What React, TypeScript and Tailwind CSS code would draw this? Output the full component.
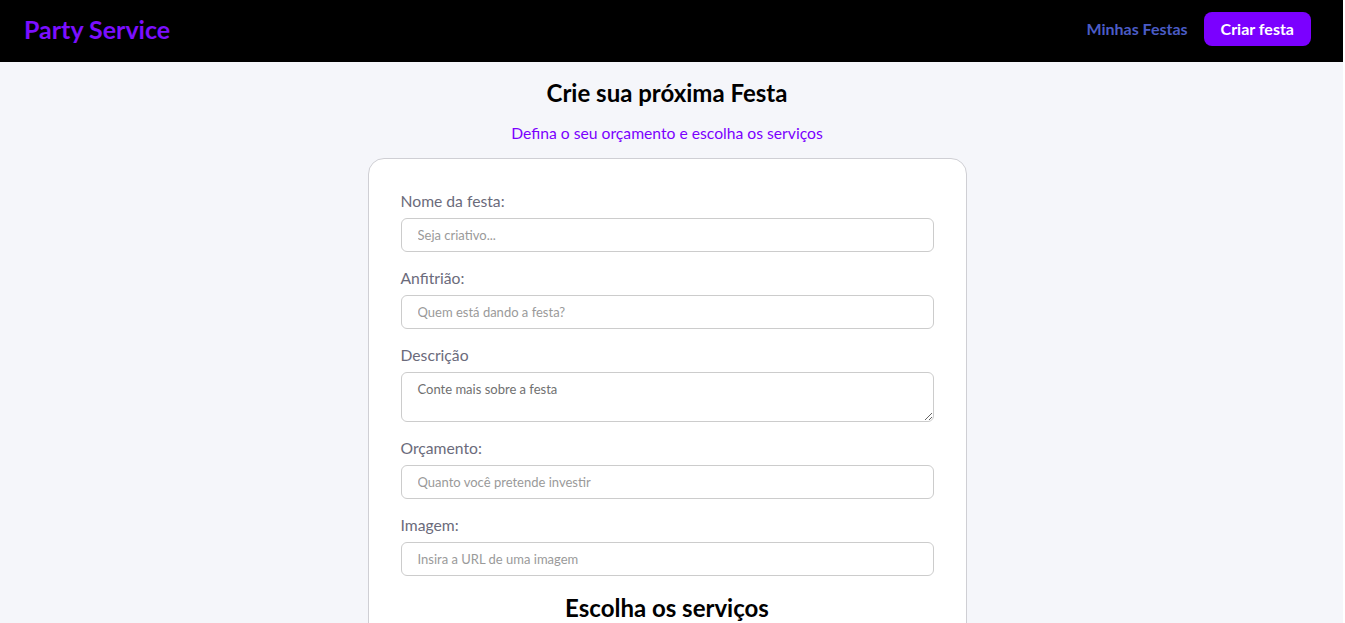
import React from "react";

const fields = [
  { label: "Nome da festa:", ph: "Seja criativo..." },
  { label: "Anfitrião:", ph: "Quem está dando a festa?" },
];

export default function App() {
  const inputCls =
    "block w-full h-[34px] rounded-md border border-[#cccccc] bg-white px-4 text-[13px] text-[#333] placeholder:text-[#9a9a9a] outline-none";
  const labelCls = "block text-[15.7px] leading-6 text-[#6b6b7b] mb-[5px]";
  return (
    <div
      className="min-h-screen bg-[#f5f6fa] w-[1343px]"
      style={{ fontFamily: "Lato, 'Noto Sans', sans-serif" }}
    >
      <header className="h-[62px] bg-black flex items-center justify-between pl-6 pr-8 pb-1">
        <h1 className="text-[25px] font-bold text-[#7b0fff] leading-8">Party Service</h1>
        <nav className="flex items-center gap-4">
          <a className="text-[16px] font-bold text-[#4b5cc6]">Minhas Festas</a>
          <button className="h-[34px] px-[17px] rounded-lg bg-[#7b00ff] text-white text-[16px] font-bold">
            Criar festa
          </button>
        </nav>
      </header>
      <main className="flex flex-col items-center w-[1334px]">
        <h2 className="mt-[15px] text-[24px] leading-8 font-bold text-black">Crie sua próxima Festa</h2>
        <p className="mt-3 text-[15.7px] leading-6 text-[#7b00ff]">Defina o seu orçamento e escolha os serviços</p>
        <div className="mt-[13px] w-[599px] bg-white border border-[#cfcfd4] rounded-2xl px-8 pt-[30px] pb-8">
          {fields.map((f) => (
            <div key={f.label} className="mb-[14px]">
              <label className={labelCls}>{f.label}</label>
              <input className={inputCls} placeholder={f.ph} />
            </div>
          ))}
          <div className="mb-[14px]">
            <label className={labelCls}>Descrição</label>
            <textarea
              className="block w-full h-[50px] rounded-md border border-[#cccccc] bg-white px-4 py-2 text-[13px] leading-4 text-[#333] placeholder:text-[#707070] outline-none"
              placeholder="Conte mais sobre a festa"
            />
          </div>
          <div className="mb-[14px]">
            <label className={labelCls}>Orçamento:</label>
            <input className={inputCls} placeholder="Quanto você pretende investir" />
          </div>
          <div>
            <label className={labelCls}>Imagem:</label>
            <input className={inputCls} placeholder="Insira a URL de uma imagem" />
          </div>
          <h2 className="mt-4 text-center text-[24px] leading-8 font-bold text-black">Escolha os serviços</h2>
          <div className="h-[200px]" />
        </div>
      </main>
    </div>
  );
}
